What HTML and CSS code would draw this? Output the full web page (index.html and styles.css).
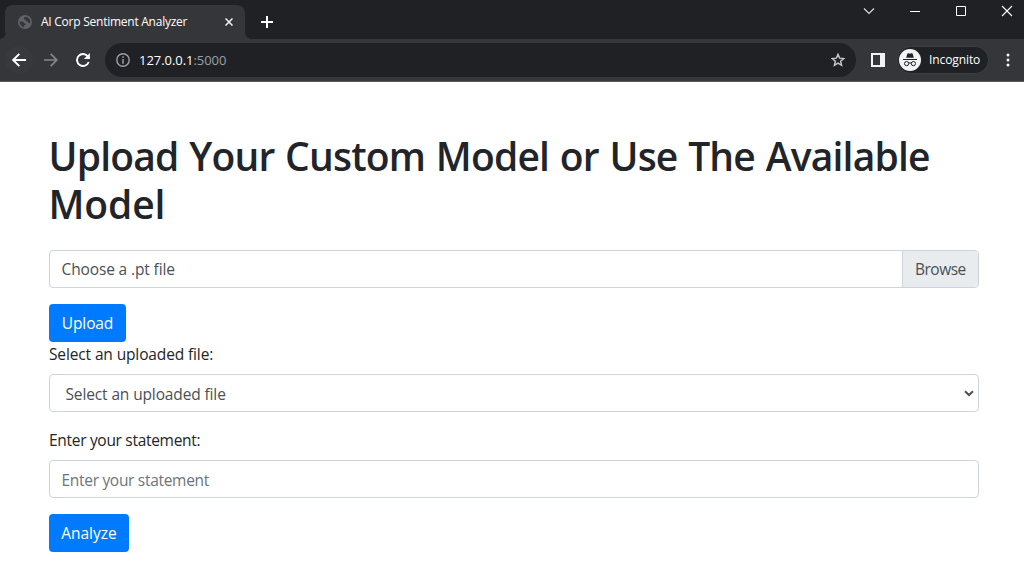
FILE: index.html
```html
<!DOCTYPE html>
<html lang="en">
<head>
<meta charset="utf-8">
<title>AI Corp Sentiment Analyzer</title>
<link rel="stylesheet" href="styles.css">
</head>
<body>
<header class="browser">
  <div class="tabstrip">
    <div class="tab">
      <svg class="globe" width="14" height="14" viewBox="0 0 14 14"><circle cx="7" cy="7" r="7" fill="#5f6368"/><path d="M1.6 6.6H4.2Q5.8 6.8 6 8.2L7.6 8.6 7.4 10.2 6 10.6V12.4Q2 11.6 1.6 6.6ZM8.2 1.7 6 2.2 5.8 4 7.4 4.6 7.6 6 9.6 6.3 10.2 8H12.3Q12.9 3.6 8.2 1.7Z" fill="#35363a"/></svg>
      <span class="tab-title">AI Corp Sentiment Analyzer</span>
      <svg class="tab-close" width="8" height="8" viewBox="0 0 8 8"><path d="M.5.5 7.5 7.5M7.5.5.5 7.5" stroke="#f1f3f4" stroke-width="1.5"/></svg>
    </div>
    <svg class="new-tab" width="12" height="12" viewBox="0 0 12 12"><path d="M6 0V12M0 6H12" stroke="#fff" stroke-width="2"/></svg>
    <div class="window-controls">
      <svg width="12" height="12" viewBox="0 0 12 12"><path d="M1 3.5 6 8.5 11 3.5" fill="none" stroke="#e0e0e2" stroke-width="1.1"/></svg>
      <svg width="12" height="12" viewBox="0 0 12 12"><path d="M1 6.5H11" stroke="#fff"/></svg>
      <svg width="12" height="12" viewBox="0 0 12 12"><path d="M1.5 1.5H10.5V10.5H1.5Z" fill="none" stroke="#fff"/></svg>
      <svg width="12" height="12" viewBox="0 0 12 12"><path d="M1 1 11 11M11 1 1 11" stroke="#fff" stroke-width="1.1"/></svg>
    </div>
  </div>
  <div class="toolbar">
    <span class="nav-button nav-back"><svg width="14" height="14" viewBox="0 0 14 14"><path d="M14 7H1.3M7.3.8 1.2 7 7.3 13.2" fill="none" stroke="#fff" stroke-width="1.9"/></svg></span>
    <span class="nav-button"><svg width="14" height="14" viewBox="0 0 14 14"><path d="M0 7H12.7M6.7.8 12.8 7 6.7 13.2" fill="none" stroke="#85868a" stroke-width="1.7"/></svg></span>
    <span class="nav-button"><svg width="14" height="14" viewBox="0 0 14 14"><path d="M12 3.6A6 6 0 1 0 12.7 9" fill="none" stroke="#fff" stroke-width="1.9"/><path d="M13.9.1V6.1H7.9Z" fill="#fff"/></svg></span>
    <div class="omnibox">
      <svg class="info" width="14" height="14" viewBox="0 0 14 14"><circle cx="7" cy="7" r="6.2" fill="none" stroke="#9aa0a6" stroke-width="1.4"/><path d="M7 3.2V4.7M7 6V10.7" stroke="#9aa0a6" stroke-width="1.5"/></svg>
      <span class="url">127.0.0.1<span class="port">:5000</span></span>
      <svg class="star" width="14" height="14" viewBox="0 0 14 14"><path d="M7 1.3 8.6 5.1 12.8 5.5 9.6 8.2 10.6 12.3 7 10.1 3.4 12.3 4.4 8.2 1.2 5.5 5.4 5.1Z" fill="none" stroke="#c8c9cb" stroke-width="1.4"/></svg>
    </div>
    <svg class="side-panel" width="14" height="14" viewBox="0 0 14 14"><path fill="#f1f3f4" fill-rule="evenodd" d="M0 0H14V14H0ZM2 2V12H9V2Z"/></svg>
    <div class="profile">
      <svg width="22" height="22" viewBox="0 0 22 22"><circle cx="11" cy="11" r="11" fill="#f1f3f4"/><path d="M7.2 8.8 8.3 4.8Q8.7 4 9.5 4.3L11 4.7 12.5 4.3Q13.3 4 13.7 4.8L14.8 8.8Z" fill="#202124"/><path d="M4 10.5H18" stroke="#202124"/><circle cx="7.6" cy="14.6" r="2.1" fill="none" stroke="#202124"/><circle cx="14.4" cy="14.6" r="2.1" fill="none" stroke="#202124"/><path d="M9.6 14.2Q11 13.4 12.4 14.2" fill="none" stroke="#202124"/></svg>
      <span>Incognito</span>
    </div>
    <svg class="menu" width="4" height="14" viewBox="0 0 4 14"><g fill="#f1f3f4"><circle cx="2" cy="2" r="1.5"/><circle cx="2" cy="7" r="1.5"/><circle cx="2" cy="12" r="1.5"/></g></svg>
  </div>
</header>
<main class="container">
  <h1>Upload Your Custom Model or Use The Available <span class="last-line">Model</span></h1>
  <form>
    <div class="file-field">
      <span class="file-name">Choose a .pt file</span>
      <span class="browse">Browse</span>
    </div>
    <button class="btn btn-upload" type="button">Upload</button>
    <div class="group">
      <label for="file">Select an uploaded file:</label>
      <div class="control select" id="file"><span>Select an uploaded file</span>
        <svg width="10" height="7" viewBox="0 0 10 7"><path d="M1 1.2 5 5 9 1.2" fill="none" stroke="#495057" stroke-width="2"/></svg>
      </div>
    </div>
    <div class="group statement-group">
      <label for="statement">Enter your statement:</label>
      <input class="control statement" id="statement" placeholder="Enter your statement">
    </div>
    <button class="btn btn-analyze" type="button">Analyze</button>
  </form>
</main>
</body>
</html>
```
FILE: styles.css
```css
* { box-sizing: border-box; }
body { margin: 0; height: 571px; overflow: hidden; background: #fff; color: #212529; font: 400 15.5px/24px "Open Sans", "Noto Sans", sans-serif; letter-spacing: -0.13px; }
svg { display: block; flex: none; }
.browser { height: 82px; background: #35363a; border-bottom: 1px solid #5c5a60; color: #fff; }
.tabstrip { height: 39px; display: flex; align-items: flex-start; background: #202124; }
.tab { position: relative; display: flex; align-items: center; width: 240px; height: 34px; margin: 5px 0 0 5px; padding: 0 12px 0 13px; border-radius: 8px 8px 0 0; background: #35363a; }
.tab::before, .tab::after { content: ""; position: absolute; bottom: 0; width: 6px; height: 6px; }
.tab::before { left: -5px; background: radial-gradient(circle at 0 0, #202124 5.5px, #35363a 6px); }
.tab::after { right: -6px; background: radial-gradient(circle at 100% 0, #202124 5.5px, #35363a 6px); }
.tab-title { flex: 1; margin-left: 9px; font-size: 12px; line-height: 16px; letter-spacing: -0.25px; white-space: nowrap; }
.new-tab { margin: 16px 0 0 16px; }
.window-controls { display: flex; gap: 34px; margin: 5px 11px 0 auto; }
.toolbar { display: flex; align-items: center; height: 42px; }
.nav-button { display: flex; align-items: center; justify-content: center; width: 28px; height: 28px; margin-right: 4px; border-radius: 50%; }
.nav-back { margin-left: 5px; background: #38393d; }
.omnibox { display: flex; align-items: center; width: 751px; height: 34px; margin-left: 4px; padding: 0 11px; border-radius: 17px; background: #202124; }
.url { flex: 1; margin-left: 9px; padding-bottom: 1px; font-size: 13px; line-height: 18px; letter-spacing: -0.05px; }
.port { color: #9aa0a6; }
.side-panel { margin-left: 15px; }
.profile { display: flex; align-items: center; width: 92px; height: 28px; margin-left: 12px; padding-left: 1px; border: 1px solid #3c3d41; border-radius: 14px; background: #202124; font-size: 12px; letter-spacing: -0.1px; }
.profile span { margin-left: 8px; }
.menu { margin-left: 17px; }
.container { padding: 50px 45px 0 48.5px; }
form { padding-left: 0.5px; }
h1 { margin: 0 0 22px; font-size: 39px; font-weight: 570; line-height: 48px; letter-spacing: -0.8px; word-spacing: 1.3px; }
.last-line { letter-spacing: -0.1px; }
.file-field, .control { display: flex; align-items: center; width: 100%; height: 38px; border: 1px solid #ced4da; border-radius: 4px; background: #fff; color: #495057; }
.file-field { justify-content: space-between; margin-bottom: 16px; padding-left: 11.5px; overflow: hidden; }
.browse { height: 36px; width: 76px; padding-left: 12px; border-left: 1px solid #ced4da; background: #e9ecef; line-height: 37px; letter-spacing: -0.5px; }
.btn { display: block; height: 38px; padding: 0; border: 0; border-radius: 4px; background: #007bff; color: #fff; font: inherit; text-align: center; }
.btn-upload { width: 77px; letter-spacing: -0.1px; }
.btn-analyze { width: 80px; }
.group { margin-bottom: 16px; }
label { display: block; margin-bottom: 8px; }
.select { justify-content: space-between; padding: 1px 4px 0 15.5px; }
.select svg { margin-bottom: 1px; }
.statement-group { letter-spacing: -0.3px; }
.statement { padding: 2px 11.5px 0; font: inherit; letter-spacing: inherit; }
.statement::placeholder { color: #6c757d; opacity: 1; }
```
